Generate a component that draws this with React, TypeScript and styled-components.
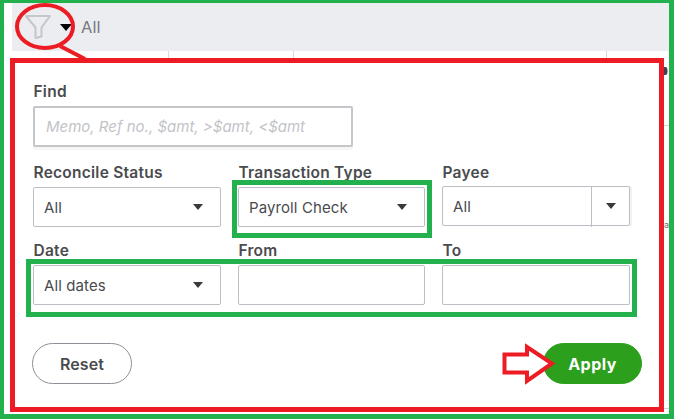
import { createGlobalStyle, styled } from "styled-components";

const GlobalStyle = createGlobalStyle`
  html, body {
    margin: 0;
    padding: 0;
    background: #fff;
  }
  * {
    box-sizing: border-box;
  }
`;

const Page = styled.div`
  position: relative;
  width: 674px;
  height: 419px;
  overflow: hidden;
  font-family: "Inter", "Liberation Sans", sans-serif;
  color: #393a3d;
`;

const Frame = styled.div`
  display: flex;
  flex-direction: column;
  width: 100%;
  height: 100%;
  border-style: solid;
  border-color: #22b14c;
  border-width: 3px 5px 5px 4px;
  background: #fff;
`;

const FilterBar = styled.div`
  display: flex;
  align-items: center;
  flex: none;
  height: 48px;
  margin-left: 8px;
  padding-left: 13px;
  background: #ecedf1;
`;

const AllText = styled.span`
  margin-left: 9px;
  font-size: 16.5px;
  color: #76787d;
`;

const TickStrip = styled.div`
  flex: none;
  height: 7px;
  background:
    linear-gradient(#d9dadd, #d9dadd) 164px 0 / 1px 100% no-repeat,
    linear-gradient(#d9dadd, #d9dadd) 289px 0 / 1px 100% no-repeat,
    linear-gradient(#d9dadd, #d9dadd) 602px 0 / 1px 100% no-repeat;
`;

const Panel = styled.div`
  flex: none;
  height: 354px;
  margin: 0 5px 0 6px;
  padding: 18px 17px 0 18px;
  border: 5px solid #ed1c24;
  background: #fff;
`;

const Field = styled.div<{ $width?: number }>`
  display: flex;
  flex-direction: column;
  width: ${({ $width }) => ($width ? `${$width}px` : "auto")};
`;

const Label = styled.label`
  height: 20px;
  margin: 0 0 5px 0.5px;
  font-size: 15.5px;
  font-weight: 600;
  line-height: 22px;
  letter-spacing: 0.25px;
  color: #4a4b4e;
`;

const Grid = styled.div<{ $top: number }>`
  display: grid;
  grid-template-columns: 188px 187px 188px;
  column-gap: 17px;
  margin-top: ${({ $top }) => $top}px;
`;

const Box = styled.div<{ $lift?: boolean }>`
  display: flex;
  align-items: center;
  height: 40px;
  margin-top: ${({ $lift }) => ($lift ? -1 : 0)}px;
  padding-left: 10px;
  border: 1px solid #babec5;
  border-radius: 2px;
  background: #fff;
  box-shadow: ${({ $lift }) => ($lift ? "2px 0 0 #f2f2f3" : "none")};
  font-size: 15px;
  letter-spacing: 0.1px;
  color: #4a4b4e;
`;

const FindBox = styled(Box)`
  height: 41px;
  padding-left: 11px;
  border: 2px solid #c4c6ca;
  box-shadow: 0 3px 0 #f6f6f6;
  font-size: 15px;
  font-style: italic;
  letter-spacing: 0;
  color: #c2c4c8;
`;

const SelectText = styled.span`
  flex: 1;
`;

const Caret = styled.svg`
  flex: none;
  width: 10px;
  height: 6px;
  margin-right: 17px;
  fill: #393a3d;
`;

const SplitButton = styled.span`
  display: flex;
  align-items: center;
  justify-content: center;
  flex: none;
  align-self: stretch;
  width: 38px;
  margin-bottom: -2px;
  border-left: 1px solid #babec5;

  svg {
    margin: 0 0 2px;
  }
`;

const Footer = styled.div`
  display: flex;
  justify-content: space-between;
  margin: 38px 0 0 -1px;
`;

const Pill = styled.button<{ $primary?: boolean }>`
  width: ${({ $primary }) => ($primary ? 99 : 100)}px;
  height: 41px;
  padding: 0;
  border: 1px solid ${({ $primary }) => ($primary ? "#2ca01c" : "#8d9096")};
  border-radius: 21px;
  background: ${({ $primary }) => ($primary ? "#2ca01c" : "#fff")};
  font-family: inherit;
  font-size: 16px;
  font-weight: ${({ $primary }) => ($primary ? 700 : 600)};
  letter-spacing: ${({ $primary }) => ($primary ? 0.5 : 0.1)}px;
  color: ${({ $primary }) => ($primary ? "#fff" : "#4a4b4e")};
`;

const Overlay = styled.svg`
  position: absolute;
  top: 0;
  left: 0;
  pointer-events: none;
`;

const StrayLetter = styled.span`
  position: absolute;
  top: 219px;
  left: 664px;
  font-size: 9px;
  line-height: 11px;
  color: #6b6c72;
`;

const caret = (
  <Caret viewBox="0 0 10 6">
    <path d="M0 0h10L5 6z" />
  </Caret>
);

const Select = ({ value }: { value: string }) => (
  <Box>
    <SelectText>{value}</SelectText>
    {caret}
  </Box>
);

export default function App() {
  return (
    <Page>
      <GlobalStyle />
      <Frame>
        <FilterBar>
          <svg width="26" height="24" viewBox="0 0 26 24" fill="none">
            <path
              d="M1 1h24L16.500 12.500V21.500L10.500 23V12.500z"
              stroke="#c4c6cb"
              strokeWidth="2"
              strokeLinejoin="round"
            />
          </svg>
          <svg width="12" height="7" viewBox="0 0 12 7" style={{ marginLeft: 9 }}>
            <path d="M0 0h12L6 7z" fill="#000" />
          </svg>
          <AllText>All</AllText>
        </FilterBar>
        <TickStrip />
        <Panel>
          <Field $width={320}>
            <Label>Find</Label>
            <FindBox>Memo, Ref no., $amt, &gt;$amt, &lt;$amt</FindBox>
          </Field>
          <Grid $top={15}>
            <Field>
              <Label>Reconcile Status</Label>
              <Select value="All" />
            </Field>
            <Field>
              <Label>Transaction Type</Label>
              <Select value="Payroll Check" />
            </Field>
            <Field>
              <Label>Payee</Label>
              <Box $lift>
                <SelectText>All</SelectText>
                <SplitButton>{caret}</SplitButton>
              </Box>
            </Field>
          </Grid>
          <Grid $top={13}>
            <Field>
              <Label>Date</Label>
              <Select value="All dates" />
            </Field>
            <Field>
              <Label>From</Label>
              <Box />
            </Field>
            <Field>
              <Label>To</Label>
              <Box />
            </Field>
          </Grid>
          <Footer>
            <Pill>Reset</Pill>
            <Pill $primary>Apply</Pill>
          </Footer>
        </Panel>
      </Frame>
      <StrayLetter>a</StrayLetter>
      <Overlay width="674" height="419" viewBox="0 0 674 419" fill="none">
        <ellipse cx="45" cy="26.500" rx="28" ry="21.500" stroke="#ed1c24" strokeWidth="4" />
        <path d="M60 46l25 13" stroke="#ed1c24" strokeWidth="4" />
        <rect x="234.500" y="182.500" width="195" height="53" stroke="#22b14c" strokeWidth="5" />
        <rect x="28.500" y="261.500" width="606" height="53" stroke="#22b14c" strokeWidth="5" />
        <path
          d="M504.500 354.500H527V347L552 363.500L527 381V372.500H504.500z"
          fill="#fff"
          stroke="#ed1c24"
          strokeWidth="4"
        />
        <path d="M664 67h1.500a2 4 0 0 1 0 8H664z" fill="#3f4450" />
        <path d="M664 125.500h5M664 408.500h5" stroke="#d4d4d6" />
      </Overlay>
    </Page>
  );
}
